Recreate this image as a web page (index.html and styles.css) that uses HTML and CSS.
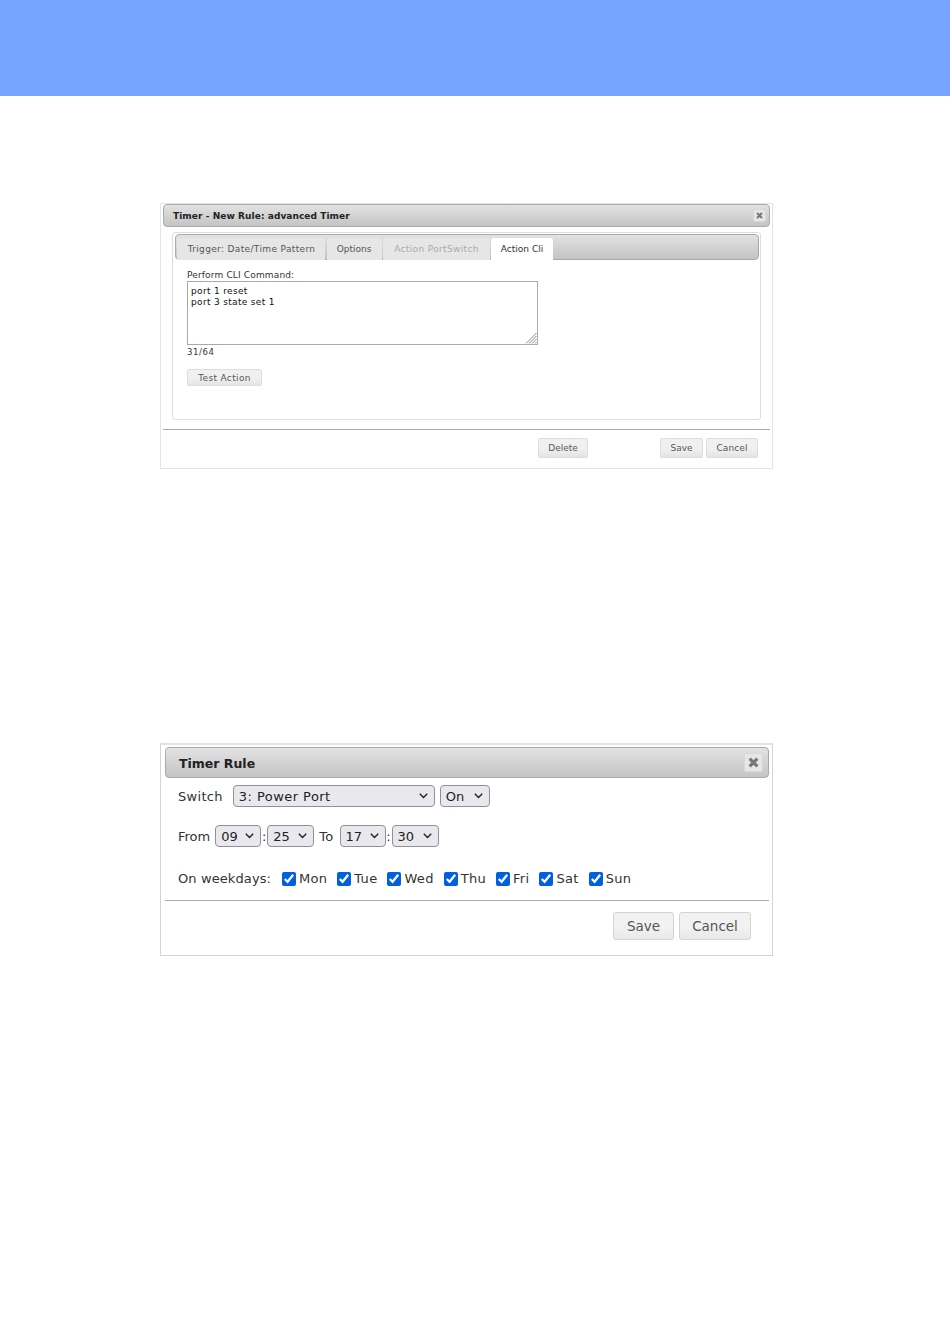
FILE: index.html
```html
<!DOCTYPE html>
<html lang="en">
<head>
  <meta charset="UTF-8">
  <meta name="viewport" content="width=device-width, initial-scale=1.0">
  <title>Timer Rules</title>
  <link rel="stylesheet" href="styles.css">
</head>
<body>
  <div class="top-bar"></div>

  <!-- Old style dialog -->
  <div class="dialog small-dialog">
    <div class="title-bar">
      <span>Timer - New Rule: advanced Timer</span>
      <button class="close-button">
        <svg width="7" height="7" viewBox="0 0 10 10"><path d="M1.5 1.5 8.5 8.5M8.5 1.5 1.5 8.5" stroke="#777" stroke-width="3"/></svg>
      </button>
    </div>
    <div class="tab-panel">
      <div class="tab-strip">
        <div class="tab tab-first">Trigger: Date/Time Pattern</div>
        <div class="tab tab-options">Options</div>
        <div class="tab tab-disabled">Action PortSwitch</div>
        <div class="tab tab-active">Action Cli</div>
      </div>
      <div class="tab-body">
        <label class="cli-label" for="cli">Perform CLI Command:</label>
        <div class="cli-wrap">
          <textarea class="cli-input" id="cli">port 1 reset
port 3 state set 1</textarea>
          <svg class="cli-grip" width="12" height="12" viewBox="0 0 12 12">
            <path d="M11.5 1 1 11.5M11.5 4 4 11.5M11.5 7 7 11.5M11.5 10 10 11.5" stroke="#8a8a8a" stroke-width="1"/>
          </svg>
        </div>
        <div class="cli-count">31/64</div>
        <button class="small-button test-button">Test Action</button>
      </div>
    </div>
    <div class="small-footer">
      <button class="small-button delete-button">Delete</button>
      <button class="small-button save-button">Save</button>
      <button class="small-button cancel-button">Cancel</button>
    </div>
  </div>

  <!-- New style dialog -->
  <div class="dialog large-dialog">
    <div class="title-bar">
      <span>Timer Rule</span>
      <button class="close-button">
        <svg width="11" height="11" viewBox="0 0 10 10"><path d="M1.5 1.5 8.5 8.5M8.5 1.5 1.5 8.5" stroke="#777" stroke-width="3"/></svg>
      </button>
    </div>
    <div class="form-row switch-row">
      <span class="switch-label">Switch</span>
      <select class="select-port"><option>3: Power Port</option></select>
      <select class="select-state"><option>On</option></select>
    </div>
    <div class="form-row time-row">
      <span class="from-label">From</span>
      <select class="select-time"><option>09</option></select><span class="colon">:</span><select class="select-time wide"><option>25</option></select>
      <span class="to-label">To</span>
      <select class="select-time"><option>17</option></select><span class="colon">:</span><select class="select-time wide"><option>30</option></select>
    </div>
    <div class="form-row days-row">
      <span class="days-label">On weekdays:</span>
      <label class="day"><input type="checkbox" checked>Mon</label>
      <label class="day"><input type="checkbox" checked>Tue</label>
      <label class="day"><input type="checkbox" checked>Wed</label>
      <label class="day"><input type="checkbox" checked>Thu</label>
      <label class="day"><input type="checkbox" checked>Fri</label>
      <label class="day"><input type="checkbox" checked>Sat</label>
      <label class="day"><input type="checkbox" checked>Sun</label>
    </div>
    <div class="large-footer">
      <button class="large-button save-large">Save</button>
      <button class="large-button cancel-large">Cancel</button>
    </div>
  </div>
</body>
</html>
```

FILE: styles.css
```css
body, html {
  margin: 0;
  padding: 0;
  background-color: white;
  font-family: "DejaVu Sans", Verdana, sans-serif;
  color: #333;
}
.top-bar {
  height: 96px;
  background-color: #75a5ff;
}
.dialog {
  box-sizing: border-box;
  width: 613px;
  margin-left: 160px;
  background-color: white;
}
.small-dialog {
  height: 266px;
  margin-top: 107px;
  padding: 0 2px;
  border: 1px solid #e4e4e4;
  font-size: 9px;
}
.large-dialog {
  height: 213px;
  margin-top: 274px;
  padding: 2px 3px 3px 4px;
  border: 1px solid #d4d4d4;
  border-top: 2px solid #e2e2e2;
  font-size: 13px;
}
.title-bar {
  display: flex;
  justify-content: space-between;
  align-items: center;
  box-sizing: border-box;
  border: 1px solid #aaa;
  border-radius: 4px;
  background: linear-gradient(#e2e2e2, #c4c4c4);
  font-weight: bold;
  color: #222;
}
.title-bar > span {
  padding-top: 1px;
}
.small-dialog .title-bar {
  height: 23px;
  padding: 0 3px 0 9px;
  font-size: 9px;
  letter-spacing: 0.07px;
}
.large-dialog .title-bar {
  height: 31px;
  padding: 0 5px 0 13px;
  font-size: 12.5px;
}
.close-button {
  display: flex;
  align-items: center;
  justify-content: center;
  padding: 0;
  border: 1px solid #d8d8d8;
  border-radius: 2px;
  background-color: #e6e6e6;
}
.small-dialog .close-button {
  width: 13px;
  height: 13px;
}
.large-dialog .close-button {
  width: 19px;
  height: 19px;
}
.tab-panel {
  box-sizing: border-box;
  width: 589px;
  height: 188px;
  margin: 5px 0 0 9px;
  border: 1px solid #ddd;
  border-radius: 3px;
  padding: 1px 0 0 2px;
}
.tab-strip {
  display: flex;
  box-sizing: border-box;
  width: 584px;
  height: 26px;
  padding: 3px 0 0 1px;
  gap: 1px;
  border: 1px solid #aaa;
  border-radius: 4px;
  background: linear-gradient(#e2e2e2, #c4c4c4);
}
.tab {
  display: flex;
  align-items: center;
  justify-content: center;
  box-sizing: border-box;
  height: 22px;
  border-radius: 3px 3px 0 0;
  background-color: #e6e6e6;
  color: #555;
}
.tab-first {
  width: 148px;
  padding-left: 1px;
  letter-spacing: 0.35px;
}
.tab-options {
  width: 55px;
  margin-left: 1px;
  padding-right: 1px;
}
.tab-disabled {
  width: 107px;
  color: #aaa;
  letter-spacing: 0.35px;
}
.tab-active {
  width: 62px;
  height: 23px;
  padding-bottom: 1px;
  background-color: white;
  color: #333;
}
.tab-body {
  display: flex;
  flex-direction: column;
  align-items: flex-start;
  padding: 10px 0 0 12px;
}
.cli-label {
  line-height: 11px;
  letter-spacing: 0.15px;
}
.cli-wrap {
  position: relative;
  display: flex;
}
.cli-input {
  box-sizing: border-box;
  width: 351px;
  height: 64px;
  margin: 0;
  padding: 4px 3px 3px;
  border: 1px solid #aaa;
  resize: none;
  font-family: "DejaVu Sans", Verdana, sans-serif;
  font-size: 9px;
  line-height: 11px;
  letter-spacing: 0.33px;
  color: #111;
}
.cli-grip {
  position: absolute;
  right: 1px;
  bottom: 1px;
}
.cli-count {
  margin-top: 2px;
  line-height: 11px;
  font-size: 8.5px;
  letter-spacing: 0.6px;
}
.small-button {
  box-sizing: border-box;
  height: 20px;
  padding: 0;
  border: 1px solid #ddd;
  border-radius: 2px;
  background: linear-gradient(#f0f0f0 55%, #e4e4e4);
  font-family: "DejaVu Sans", Verdana, sans-serif;
  font-size: 9px;
  color: #555;
}
.test-button {
  width: 75px;
  height: 17px;
  margin-top: 11px;
  letter-spacing: 0.35px;
}
.small-footer {
  display: flex;
  box-sizing: border-box;
  height: 39px;
  margin-top: 9px;
  padding: 8px 0 0 375px;
  border-top: 1px solid #aaa;
  gap: 3px;
}
.delete-button {
  width: 50px;
  margin-right: 69px;
}
.save-button {
  width: 43px;
}
.cancel-button {
  width: 52px;
  letter-spacing: 0.1px;
}
.form-row {
  display: flex;
  align-items: center;
  padding-left: 13px;
  color: #333;
}
.form-row select {
  box-sizing: border-box;
  height: 22px;
  margin: 0;
  padding: 0 0 0 5px;
  border: 1px solid #8f8f9d;
  border-radius: 4px;
  appearance: none;
  background-color: #e9e9ed;
  background-image: url("data:image/svg+xml,%3Csvg xmlns='http://www.w3.org/2000/svg' width='9' height='6' viewBox='0 0 9 6'%3E%3Cpath d='M.8.8 4.5 4.5 8.2.8' fill='none' stroke='%23222' stroke-width='1.4'/%3E%3C/svg%3E");
  background-repeat: no-repeat;
  background-position: right 6px center;
  font-family: "DejaVu Sans", Verdana, sans-serif;
  font-size: 13px;
  color: #222;
}
.switch-row {
  margin-top: 7px;
}
.switch-label {
  margin-right: 10px;
  letter-spacing: 0.3px;
}
.form-row .select-port {
  width: 202px;
  letter-spacing: 0.45px;
}
.form-row .select-state {
  width: 50px;
  margin-left: 5px;
}
.time-row {
  margin-top: 18px;
}
.from-label {
  margin-right: 5px;
}
.colon {
  width: 6px;
  text-align: center;
}
.form-row .select-time {
  width: 46px;
}
.form-row .select-time.wide {
  width: 47px;
}
.to-label {
  margin: 0 6px 0 5px;
  letter-spacing: 0.3px;
}
.days-row {
  margin-top: 24px;
  letter-spacing: 0.3px;
}
.days-label {
  margin-right: 11px;
  letter-spacing: 0.1px;
}
.day {
  display: flex;
  align-items: center;
  margin-right: 10px;
}
.day input {
  width: 14px;
  height: 14px;
  margin: 0 3px 0 0;
  accent-color: #0060df;
}
.large-footer {
  display: flex;
  justify-content: flex-end;
  gap: 5px;
  box-sizing: border-box;
  height: 50px;
  margin-top: 14px;
  padding: 11px 18px 0 0;
  border-top: 1px solid #aaa;
}
.large-button {
  box-sizing: border-box;
  height: 28px;
  padding: 0;
  border: 1px solid #d4d4d4;
  border-radius: 3px;
  background: linear-gradient(#f2f2f2 55%, #e8e8e8);
  font-family: "DejaVu Sans", Verdana, sans-serif;
  font-size: 13.5px;
  color: #555;
}
.save-large {
  width: 61px;
}
.cancel-large {
  width: 72px;
}
```
